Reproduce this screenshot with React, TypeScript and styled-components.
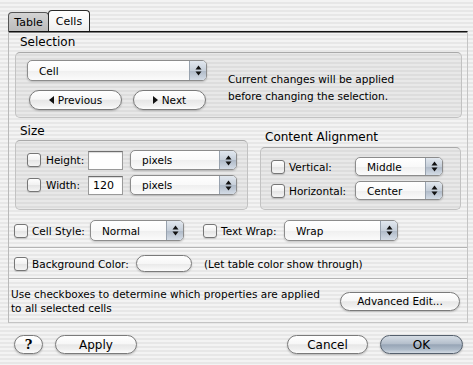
import styled, { createGlobalStyle } from 'styled-components'

const GlobalStyle = createGlobalStyle`
    html, body {
        margin: 0;
        padding: 0;
    }
    body {
        font-family: "DejaVu Sans", "Liberation Sans", sans-serif;
        font-size: 10.5px;
        color: #000;
    }
`

function Arrows() {
    return (
        <svg width="7" height="11" viewBox="0 0 7 11">
            <path d="M3.5 0.5 L6.5 4.5 L0.5 4.5 Z" fill="#111" />
            <path d="M3.5 10.5 L6.5 6.5 L0.5 6.5 Z" fill="#111" />
        </svg>
    )
}

function Tri({ dir }: { dir: 'left' | 'right' }) {
    return (
        <svg width="5" height="8" viewBox="0 0 5 8">
            {dir === 'left'
                ? <path d="M0 4 L5 0 L5 8 Z" fill="#111" />
                : <path d="M5 4 L0 0 L0 8 Z" fill="#111" />}
        </svg>
    )
}

function Popup({ value, w, h = 20 }: { value: string; w: number; h?: number }) {
    return (
        <PopupBox style={{ width: w, height: h }}>
            <PopupText>{value}</PopupText>
            <PopupArrow><Arrows /></PopupArrow>
        </PopupBox>
    )
}

function App() {
    return (
        <Window>
            <GlobalStyle />
            <TabBar>
                <Tab>Table</Tab>
                <Tab $active>Cells</Tab>
            </TabBar>
            <Panel>
                <Title>Selection</Title>
                <SelectionGroup>
                    <SelLeft>
                        <Popup value="Cell" w={180} h={21} />
                        <NavRow>
                            <Button $w={93}><Tri dir="left" /> Previous</Button>
                            <Button $w={73}><Tri dir="right" /> Next</Button>
                        </NavRow>
                    </SelLeft>
                    <Note>
                        Current changes will be applied<br />
                        before changing the selection.
                    </Note>
                </SelectionGroup>

                <Columns>
                    <Column $w={233}>
                        <Title $h={18} $pad={5}>Size</Title>
                        <Group $h={70} $pad="9px 0 0 11px">
                            <FieldRow>
                                <Check />
                                <Label $w={42}>Height:</Label>
                                <TextField $w={35}></TextField>
                                <Gap $w={7} />
                                <Popup value="pixels" w={107} />
                            </FieldRow>
                            <FieldRow>
                                <Check />
                                <Label $w={42}>Width:</Label>
                                <TextField $w={35}>120</TextField>
                                <Gap $w={7} />
                                <Popup value="pixels" w={107} />
                            </FieldRow>
                        </Group>
                    </Column>
                    <Column $w={201} $offset={6}>
                        <Title $h={19} $pad={5}>Content Alignment</Title>
                        <Group $h={63} $pad="9px 0 0 10px">
                            <FieldRow $gap={4}>
                                <Check />
                                <Label $w={66}>Vertical:</Label>
                                <Popup value="Middle" w={88} h={19} />
                            </FieldRow>
                            <FieldRow $gap={4}>
                                <Check />
                                <Label $w={66}>Horizontal:</Label>
                                <Popup value="Center" w={88} h={19} />
                            </FieldRow>
                        </Group>
                    </Column>
                </Columns>

                <StyleRow>
                    <Check />
                    <Label $w={58}>Cell Style:</Label>
                    <Popup value="Normal" w={94} h={21} />
                    <Gap $w={19} />
                    <Check />
                    <Label $w={63}>Text Wrap:</Label>
                    <Popup value="Wrap" w={114} h={21} />
                </StyleRow>

                <Separator />

                <BgRow>
                    <Check />
                    <Label $w={104}>Background Color:</Label>
                    <Swatch />
                    <Hint>(Let table color show through)</Hint>
                </BgRow>

                <Separator $top={6} />

                <InfoRow>
                    <InfoText>
                        Use checkboxes to determine which properties are applied<br />
                        to all selected cells
                    </InfoText>
                    <Button $w={120} $h={19}>Advanced Edit...</Button>
                </InfoRow>
            </Panel>

            <Footer>
                <Button $w={29} $h={19}><Help>?</Help></Button>
                <Gap $w={12} />
                <Button $w={82} $h={19}>Apply</Button>
                <Spacer />
                <Button $w={81} $h={19}>Cancel</Button>
                <Gap $w={12} />
                <Button $w={83} $h={19} $default>OK</Button>
            </Footer>
        </Window>
    )
}

const Window = styled.div`
    width: 473px;
    height: 365px;
    overflow: hidden;
    box-sizing: border-box;
    padding-top: 10px;
    background: repeating-linear-gradient(
        to bottom,
        #f3f3f3 0px,
        #f3f3f3 2px,
        #e7e7e7 2px,
        #e7e7e7 4px
    );
`

const TabBar = styled.div`
    display: flex;
    align-items: flex-end;
    height: 21px;
    padding-left: 8px;
    font-size: 11px;
`

const Tab = styled.div<{ $active?: boolean }>`
    box-sizing: border-box;
    height: ${p => (p.$active ? 21 : 19)}px;
    width: ${p => (p.$active ? 42 : 41)}px;
    margin-left: ${p => (p.$active ? -1 : 0)}px;
    display: flex;
    align-items: center;
    justify-content: center;
    padding-top: 1px;
    border: 1px solid ${p => (p.$active ? '#2a2a2a' : '#555')};
    border-bottom: none;
    border-radius: 4px 4px 0 0;
    background: ${p => (p.$active
        ? 'linear-gradient(#ffffff, #f6f6f6 60%, #ededed)'
        : 'linear-gradient(#d4d4d4, #c4c4c4 60%, #bcbcbc)')};
    position: relative;
    z-index: ${p => (p.$active ? 1 : 0)};
`

const Panel = styled.div`
    box-sizing: border-box;
    margin-left: 8px;
    width: 460px;
    height: 292px;
    border-top: 1px solid #111;
    box-shadow: inset 0 1px 0 #7d7d7d;
    border-left: 1px solid #b9b9b9;
    border-right: 1px solid #c4c4c4;
    border-bottom: 1px solid #c4c4c4;
    padding-top: 1px;
    display: flex;
    flex-direction: column;
`

const Title = styled.div<{ $h?: number; $pad?: number }>`
    height: ${p => p.$h ?? 19}px;
    line-height: ${p => p.$h ?? 19}px;
    padding-left: ${p => p.$pad ?? 11}px;
    font-size: 12px;
    white-space: nowrap;
`

const Group = styled.div<{ $h: number; $pad: string }>`
    box-sizing: border-box;
    height: ${p => p.$h}px;
    padding: ${p => p.$pad};
    border: 1px solid #c2c2c2;
    border-top-color: #a9a9a9;
    border-radius: 5px;
    background: rgba(0, 0, 0, 0.045);
    display: flex;
    flex-direction: column;
    gap: 5px;
`

const SelectionGroup = styled.div`
    box-sizing: border-box;
    margin: 0 5px 0 6px;
    height: 66px;
    padding: 7px 11px 0 11px;
    border: 1px solid #c2c2c2;
    border-top-color: #a9a9a9;
    border-radius: 5px;
    background: rgba(0, 0, 0, 0.045);
    display: flex;
`

const SelLeft = styled.div`
    width: 180px;
    display: flex;
    flex-direction: column;
`

const NavRow = styled.div`
    display: flex;
    gap: 11px;
    margin: 9px 0 0 2px;
`

const Note = styled.div`
    margin-left: 21px;
    padding-top: 11px;
    line-height: 17px;
    white-space: nowrap;
`

const Columns = styled.div`
    display: flex;
    align-items: flex-start;
    padding-left: 6px;
    margin-top: 4px;
    gap: 12px;
`

const Column = styled.div<{ $w: number; $offset?: number }>`
    width: ${p => p.$w}px;
    margin-top: ${p => p.$offset ?? 0}px;
`

const FieldRow = styled.div<{ $gap?: number }>`
    display: flex;
    align-items: center;
    & > span:first-child {
        margin-right: ${p => p.$gap ?? 5}px;
    }
`

const Check = styled.span`
    display: inline-block;
    box-sizing: border-box;
    width: 14px;
    height: 14px;
    flex: none;
    margin-right: 4px;
    border: 1px solid #767676;
    border-radius: 3px;
    background: linear-gradient(#fefefe, #f1f1f1 50%, #e4e4e4 51%, #f4f4f4);
    box-shadow: 0 1px 1px rgba(0, 0, 0, 0.15);
`

const Label = styled.span<{ $w: number }>`
    width: ${p => p.$w}px;
    flex: none;
    white-space: nowrap;
`

const Gap = styled.span<{ $w: number }>`
    width: ${p => p.$w}px;
    flex: none;
`

const Spacer = styled.span`
    flex: 1;
`

const TextField = styled.span<{ $w: number }>`
    box-sizing: border-box;
    width: ${p => p.$w}px;
    height: 19px;
    flex: none;
    padding: 0 4px;
    line-height: 18px;
    font-size: 11px;
    background: #fff;
    border: 1px solid #9a9a9a;
    border-top-color: #6e6e6e;
    box-shadow: inset 0 1px 1px rgba(0, 0, 0, 0.15);
`

const PopupBox = styled.div`
    box-sizing: border-box;
    display: flex;
    flex: none;
    border: 1px solid #8c8c8c;
    border-radius: 5px;
    overflow: hidden;
    background: linear-gradient(#ffffff, #f9f9f9 50%, #efefef 51%, #fbfbfb);
    box-shadow: 0 1px 2px rgba(0, 0, 0, 0.2);
`

const PopupText = styled.div`
    flex: 1;
    padding-left: 11px;
    display: flex;
    align-items: center;
    white-space: nowrap;
`

const PopupArrow = styled.div`
    width: 16px;
    display: flex;
    align-items: center;
    justify-content: center;
    border-left: 1px solid #98a2ae;
    background: linear-gradient(#e2e8ef, #c6cfda 50%, #aeb9c7 51%, #d4dce6);
`

const Button = styled.div<{ $w: number; $h?: number; $default?: boolean }>`
    box-sizing: border-box;
    width: ${p => p.$w}px;
    height: ${p => p.$h ?? 20}px;
    flex: none;
    display: flex;
    align-items: center;
    justify-content: center;
    gap: 4px;
    white-space: nowrap;
    border: 1px solid ${p => (p.$default ? '#55606d' : '#7a7a7a')};
    border-radius: 10px;
    background: ${p => (p.$default
        ? 'linear-gradient(#d6dde5, #b4bfcc 45%, #97a5b6 52%, #aebbc9 80%, #d3dbe4)'
        : 'linear-gradient(#ffffff, #f7f7f7 45%, #e7e7e7 52%, #f0f0f0 80%, #fdfdfd)')};
    box-shadow: 0 1px 2px rgba(0, 0, 0, 0.22);
`

const Help = styled.span`
    font-weight: bold;
    font-size: 13px;
    font-family: "DejaVu Serif", serif;
`

const StyleRow = styled.div`
    display: flex;
    align-items: center;
    height: 21px;
    margin-top: 10px;
    padding-left: 5px;
`

const Separator = styled.div<{ $top?: number }>`
    height: 1px;
    margin-top: ${p => p.$top ?? 6}px;
    background: #b3b3b3;
    box-shadow: 0 1px 0 #fafafa;
`

const BgRow = styled.div`
    display: flex;
    align-items: center;
    height: 17px;
    margin-top: 7px;
    padding-left: 5px;
`

const Swatch = styled.span`
    box-sizing: border-box;
    width: 56px;
    height: 17px;
    flex: none;
    border: 1px solid #7a7a7a;
    border-radius: 9px;
    background: linear-gradient(#ffffff, #f6f6f6 50%, #e8e8e8 51%, #fbfbfb);
    box-shadow: 0 1px 2px rgba(0, 0, 0, 0.2);
`

const Hint = styled.span`
    margin-left: 12px;
    white-space: nowrap;
`

const InfoRow = styled.div`
    display: flex;
    align-items: center;
    justify-content: space-between;
    margin-top: 8px;
    padding: 0 7px 0 2px;
`

const InfoText = styled.div`
    line-height: 14px;
    white-space: nowrap;
`

const Footer = styled.div`
    display: flex;
    align-items: center;
    margin-top: 12px;
    padding: 0 10px 0 14px;
    font-size: 12px;
`

export default App
